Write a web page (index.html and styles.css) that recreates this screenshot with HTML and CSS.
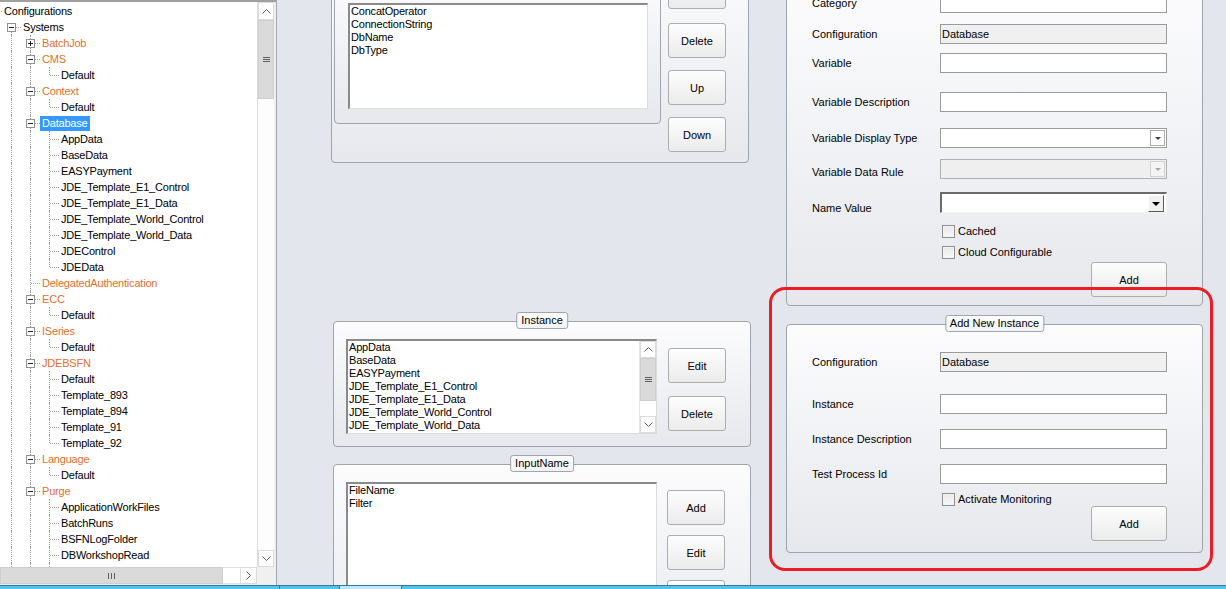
FILE: index.html
```html
<!DOCTYPE html>
<html lang="en">
<head>
    <meta charset="UTF-8">
    <title>Configurations</title>
    <link rel="stylesheet" href="styles.css">
</head>
<body>
<div class="window">
    <div class="main">

        <!-- configuration tree -->
        <aside class="tree-panel">
            <div class="tree-view">
                <div class="tree">
                    <div class="tree-rows">
                        <div class="node"><i class="cell h"></i><span class="label">Configurations</span></div>
                        <div class="node"><i class="cell"></i><i class="cell d"><b class="box"></b></i><span class="label">Systems</span></div>
                        <div class="node"><i class="cell"></i><i class="cell v"></i><i class="cell t"><b class="box plus"></b></i><span class="label cat">BatchJob</span></div>
                        <div class="node"><i class="cell"></i><i class="cell v"></i><i class="cell t"><b class="box"></b></i><span class="label cat">CMS</span></div>
                        <div class="node"><i class="cell"></i><i class="cell v"></i><i class="cell v"></i><i class="cell l"></i><span class="label">Default</span></div>
                        <div class="node"><i class="cell"></i><i class="cell v"></i><i class="cell t"><b class="box"></b></i><span class="label cat">Context</span></div>
                        <div class="node"><i class="cell"></i><i class="cell v"></i><i class="cell v"></i><i class="cell l"></i><span class="label">Default</span></div>
                        <div class="node"><i class="cell"></i><i class="cell v"></i><i class="cell t"><b class="box"></b></i><span class="label sel">Database</span></div>
                        <div class="node"><i class="cell"></i><i class="cell v"></i><i class="cell v"></i><i class="cell t"></i><span class="label">AppData</span></div>
                        <div class="node"><i class="cell"></i><i class="cell v"></i><i class="cell v"></i><i class="cell t"></i><span class="label">BaseData</span></div>
                        <div class="node"><i class="cell"></i><i class="cell v"></i><i class="cell v"></i><i class="cell t"></i><span class="label">EASYPayment</span></div>
                        <div class="node"><i class="cell"></i><i class="cell v"></i><i class="cell v"></i><i class="cell t"></i><span class="label">JDE_Template_E1_Control</span></div>
                        <div class="node"><i class="cell"></i><i class="cell v"></i><i class="cell v"></i><i class="cell t"></i><span class="label">JDE_Template_E1_Data</span></div>
                        <div class="node"><i class="cell"></i><i class="cell v"></i><i class="cell v"></i><i class="cell t"></i><span class="label">JDE_Template_World_Control</span></div>
                        <div class="node"><i class="cell"></i><i class="cell v"></i><i class="cell v"></i><i class="cell t"></i><span class="label">JDE_Template_World_Data</span></div>
                        <div class="node"><i class="cell"></i><i class="cell v"></i><i class="cell v"></i><i class="cell t"></i><span class="label">JDEControl</span></div>
                        <div class="node"><i class="cell"></i><i class="cell v"></i><i class="cell v"></i><i class="cell l"></i><span class="label">JDEData</span></div>
                        <div class="node"><i class="cell"></i><i class="cell v"></i><i class="cell t"></i><span class="label cat">DelegatedAuthentication</span></div>
                        <div class="node"><i class="cell"></i><i class="cell v"></i><i class="cell t"><b class="box"></b></i><span class="label cat">ECC</span></div>
                        <div class="node"><i class="cell"></i><i class="cell v"></i><i class="cell v"></i><i class="cell l"></i><span class="label">Default</span></div>
                        <div class="node"><i class="cell"></i><i class="cell v"></i><i class="cell t"><b class="box"></b></i><span class="label cat">ISeries</span></div>
                        <div class="node"><i class="cell"></i><i class="cell v"></i><i class="cell v"></i><i class="cell l"></i><span class="label">Default</span></div>
                        <div class="node"><i class="cell"></i><i class="cell v"></i><i class="cell t"><b class="box"></b></i><span class="label cat">JDEBSFN</span></div>
                        <div class="node"><i class="cell"></i><i class="cell v"></i><i class="cell v"></i><i class="cell t"></i><span class="label">Default</span></div>
                        <div class="node"><i class="cell"></i><i class="cell v"></i><i class="cell v"></i><i class="cell t"></i><span class="label">Template_893</span></div>
                        <div class="node"><i class="cell"></i><i class="cell v"></i><i class="cell v"></i><i class="cell t"></i><span class="label">Template_894</span></div>
                        <div class="node"><i class="cell"></i><i class="cell v"></i><i class="cell v"></i><i class="cell t"></i><span class="label">Template_91</span></div>
                        <div class="node"><i class="cell"></i><i class="cell v"></i><i class="cell v"></i><i class="cell l"></i><span class="label">Template_92</span></div>
                        <div class="node"><i class="cell"></i><i class="cell v"></i><i class="cell t"><b class="box"></b></i><span class="label cat">Language</span></div>
                        <div class="node"><i class="cell"></i><i class="cell v"></i><i class="cell v"></i><i class="cell l"></i><span class="label">Default</span></div>
                        <div class="node"><i class="cell"></i><i class="cell v"></i><i class="cell t"><b class="box"></b></i><span class="label cat">Purge</span></div>
                        <div class="node"><i class="cell"></i><i class="cell v"></i><i class="cell v"></i><i class="cell t"></i><span class="label">ApplicationWorkFiles</span></div>
                        <div class="node"><i class="cell"></i><i class="cell v"></i><i class="cell v"></i><i class="cell t"></i><span class="label">BatchRuns</span></div>
                        <div class="node"><i class="cell"></i><i class="cell v"></i><i class="cell v"></i><i class="cell t"></i><span class="label">BSFNLogFolder</span></div>
                        <div class="node"><i class="cell"></i><i class="cell v"></i><i class="cell v"></i><i class="cell t"></i><span class="label">DBWorkshopRead</span></div>
                        <div class="node"><i class="cell"></i><i class="cell v"></i><i class="cell v"></i><i class="cell v"></i></div>
                    </div>
                </div>
                <div class="vscroll">
                    <div class="sb-arrow"><svg width="9" height="5"><path d="M0.5 4.5l4-4 4 4" fill="none" stroke="#606060"/></svg></div>
                    <div class="sb-thumb tree-thumb"><svg width="7" height="5"><path d="M0 0.5h7M0 2.5h7M0 4.5h7" stroke="#606060"/></svg></div>
                    <div class="sb-track"></div>
                    <div class="sb-arrow"><svg width="9" height="5"><path d="M0.5 0.5l4 4 4-4" fill="none" stroke="#606060"/></svg></div>
                </div>
            </div>
            <div class="hscroll">
                <div class="hs-thumb"><svg width="7" height="6"><path d="M0.5 0v6M3.5 0v6M6.5 0v6" stroke="#606060"/></svg></div>
                <div class="hs-track"></div>
                <div class="hs-arrow"><svg width="5" height="9"><path d="M0.5 0.5l4 4-4 4" fill="none" stroke="#606060"/></svg></div>
                <div class="hs-corner"></div>
            </div>
        </aside>

        <!-- lists -->
        <section class="middle">
            <div class="group top-box">
                <div class="group inner-box">
                    <div class="listbox names">
                        <div class="lb-items">
                            <div>ConcatOperator</div>
                            <div>ConnectionString</div>
                            <div>DbName</div>
                            <div>DbType</div>
                        </div>
                    </div>
                </div>
                <div class="btn-stack first-cut">
                    <span class="btn"></span>
                    <span class="btn">Delete</span>
                    <span class="btn">Up</span>
                    <span class="btn">Down</span>
                </div>
            </div>

            <div class="group list-group instance-group">
                <span class="legend">Instance</span>
                <div class="listbox">
                    <div class="lb-items">
                        <div>AppData</div>
                        <div>BaseData</div>
                        <div>EASYPayment</div>
                        <div>JDE_Template_E1_Control</div>
                        <div>JDE_Template_E1_Data</div>
                        <div>JDE_Template_World_Control</div>
                        <div>JDE_Template_World_Data</div>
                    </div>
                    <div class="vbar">
                        <div class="sb-arrow"><svg width="9" height="5"><path d="M0.5 4.5l4-4 4 4" fill="none" stroke="#606060"/></svg></div>
                        <div class="sb-thumb list-thumb"><svg width="7" height="5"><path d="M0 0.5h7M0 2.5h7M0 4.5h7" stroke="#606060"/></svg></div>
                        <div class="sb-track"></div>
                        <div class="sb-arrow"><svg width="9" height="5"><path d="M0.5 0.5l4 4 4-4" fill="none" stroke="#606060"/></svg></div>
                    </div>
                </div>
                <div class="btn-stack instance-btns">
                    <span class="btn">Edit</span>
                    <span class="btn">Delete</span>
                </div>
            </div>

            <div class="group list-group input-group">
                <span class="legend">InputName</span>
                <div class="listbox">
                    <div class="lb-items">
                        <div>FileName</div>
                        <div>Filter</div>
                    </div>
                </div>
                <div class="btn-stack input-btns">
                    <span class="btn">Add</span>
                    <span class="btn">Edit</span>
                    <span class="btn"></span>
                </div>
            </div>
        </section>

        <!-- forms -->
        <section class="right">
            <div class="group form-box var-box">
                <div class="f-row mt-12"><span class="f-label">Category</span><span class="textbox"></span></div>
                <div class="f-row mt-11"><span class="f-label">Configuration</span><span class="textbox readonly">Database</span></div>
                <div class="f-row mt-9"><span class="f-label">Variable</span><span class="textbox"></span></div>
                <div class="f-row mt-19"><span class="f-label">Variable Description</span><span class="textbox"></span></div>
                <div class="f-row mt-16"><span class="f-label">Variable Display Type</span><span class="combo"><i class="combo-btn"></i></span></div>
                <div class="f-row mt-11"><span class="f-label drop-3">Variable Data Rule</span><span class="combo disabled"><i class="combo-btn"></i></span></div>
                <div class="f-row tall mt-13"><span class="f-label drop-6">Name Value</span><span class="combo sunken"><i class="combo-btn"></i></span></div>
                <div class="check-row mt-11"><span class="checkbox"></span>Cached</div>
                <div class="check-row mt-7"><span class="checkbox"></span>Cloud Configurable</div>
                <div class="f-actions mt-3"><span class="btn wide">Add</span></div>
            </div>

            <div class="group form-box instance-form">
                <span class="legend">Add New Instance</span>
                <div class="f-row mt-27"><span class="f-label">Configuration</span><span class="textbox readonly">Database</span></div>
                <div class="f-row mt-22"><span class="f-label">Instance</span><span class="textbox"></span></div>
                <div class="f-row mt-15"><span class="f-label">Instance Description</span><span class="textbox"></span></div>
                <div class="f-row mt-15"><span class="f-label">Test Process Id</span><span class="textbox"></span></div>
                <div class="check-row mt-8"><span class="checkbox"></span>Activate Monitoring</div>
                <div class="f-actions"><span class="btn wide">Add</span></div>
            </div>

            <div class="callout"></div>
        </section>
    </div>
    <div class="task-strip">
        <span class="seg first"></span>
        <span class="seg second"></span>
        <span class="seg tab"></span>
    </div>
</div>
</body>
</html>
```

FILE: styles.css
```css
* { box-sizing: border-box; }

body {
    margin: 0;
    font-family: "Liberation Sans", Arial, sans-serif;
    font-size: 11px;
    color: #000;
    background: #e3e6ec;
    overflow: hidden;
}

.window {
    width: 1226px;
    height: 589px;
    display: flex;
    flex-direction: column;
}
.main {
    height: 585px;
    display: flex;
}

/* ---- tree panel ---- */
.tree-panel {
    width: 277px;
    flex: none;
    display: flex;
    flex-direction: column;
    background: #f0f0f0;
    border-top: 2px solid #a0a0a0;
    border-right: 1px solid #a2a6ad;
    padding-right: 2px;
    padding-bottom: 1px;
}
.tree-view {
    flex: 1;
    display: flex;
    min-height: 0;
}
.tree {
    width: 257px;
    background: #fff;
    overflow: hidden;
    padding-top: 1px;
}
.tree-rows { margin-left: -17px; }
.node {
    height: 16px;
    display: flex;
    align-items: center;
    white-space: nowrap;
}
.cell {
    width: 19px;
    height: 16px;
    flex: none;
    position: relative;
}
.cell::before,
.cell::after {
    content: "";
    position: absolute;
}
.cell.v::before,
.cell.t::before { left: 9px; top: 0; bottom: 0; border-left: 1px dotted #a0a0a0; }
.cell.l::before { left: 9px; top: 0; height: 8px; border-left: 1px dotted #a0a0a0; }
.cell.d::before { left: 9px; top: 8px; bottom: 0; border-left: 1px dotted #a0a0a0; }
.cell.t::after,
.cell.l::after,
.cell.d::after,
.cell.h::after { left: 10px; right: 0; top: 8px; border-top: 1px dotted #a0a0a0; }

/* expander square sits over the connector lines */
.box {
    position: absolute;
    left: 5px;
    top: 4px;
    width: 9px;
    height: 9px;
    border: 1px solid #919191;
    background: #fff;
    z-index: 1;
}
.box::before {
    content: "";
    position: absolute;
    left: 1px;
    top: 3px;
    width: 5px;
    height: 1px;
    background: #222;
}
.box.plus::after {
    content: "";
    position: absolute;
    left: 3px;
    top: 1px;
    width: 1px;
    height: 5px;
    background: #222;
}
.label {
    height: 15px;
    line-height: 15px;
    padding: 0 2px;
    letter-spacing: -0.2px;
}
.label.cat { color: #e3702d; }
.label.sel { background: #3399ff; color: #fff; }

/* scrollbars */
.vscroll {
    width: 17px;
    display: flex;
    flex-direction: column;
    background: #fdfdfd;
    border-left: 1px solid #dcdcdc;
}
.sb-arrow {
    height: 17px;
    flex: none;
    display: flex;
    align-items: center;
    justify-content: center;
    background: #fff;
    border: 1px solid #dcdcdc;
}
.vscroll .sb-arrow:first-child { height: 18px; }
.sb-thumb {
    flex: none;
    display: flex;
    align-items: center;
    justify-content: center;
    background: #dadada;
    border: 1px solid #cfcfcf;
}
.tree-thumb { height: 79px; }
.sb-track { flex: 1; }
.hscroll {
    height: 17px;
    display: flex;
}
.hs-thumb {
    width: 223px;
    display: flex;
    align-items: center;
    justify-content: center;
    background: #dadada;
    border: 1px solid #cfcfcf;
}
.hs-track { width: 17px; background: #fff; border-top: 1px solid #e2e2e2; border-bottom: 1px solid #e2e2e2; }
.hs-arrow {
    width: 17px;
    display: flex;
    align-items: center;
    justify-content: center;
    background: #fff;
    border: 1px solid #dcdcdc;
}
.hs-corner { width: 17px; background: #f0f0f0; }

/* ---- shared controls ---- */
.group {
    position: relative;
    flex: none;
    border: 1px solid #a0a4ac;
    border-radius: 4px;
    background: linear-gradient(#fcfcfd, #e6e8ed);
}
.legend {
    position: absolute;
    top: -10px;
    left: 50%;
    transform: translateX(-50%);
    height: 17px;
    line-height: 15px;
    padding: 0 4px;
    border: 1px solid #a0a4ac;
    border-radius: 3px;
    background: linear-gradient(#fdfdfd, #f2f3f5);
    white-space: nowrap;
}
.btn {
    width: 58px;
    height: 35px;
    flex: none;
    display: flex;
    align-items: center;
    justify-content: center;
    border: 1px solid #adadad;
    border-radius: 3px;
    background: linear-gradient(#fdfdfd, #ebebeb);
}
.btn.wide { width: 76px; }
.btn-stack {
    display: flex;
    flex-direction: column;
}
.listbox {
    display: flex;
    background: #fff;
    border-style: solid;
    border-width: 2px 1px 1px 2px;
    border-color: #8a8a8a #dcdcdc #dcdcdc #8a8a8a;
    overflow: hidden;
}
.lb-items { flex: 1; padding-left: 1px; }
.lb-items div {
    height: 13px;
    line-height: 13px;
    letter-spacing: -0.2px;
    white-space: nowrap;
}
.vbar {
    width: 17px;
    display: flex;
    flex-direction: column;
    border-left: 1px solid #e4e4e4;
}
.list-thumb { height: 43px; }

/* ---- middle column ---- */
.middle {
    width: 483px;
    flex: none;
    display: flex;
    flex-direction: column;
    padding-left: 54px;
    overflow: hidden;
}
.top-box {
    width: 418px;
    height: 203px;
    margin-top: -40px;
    display: flex;
    align-items: flex-start;
}
.inner-box {
    width: 327px;
    height: 154px;
    margin: 9px 0 0 2px;
    padding: 32px 0 0 13px;
}
.names { width: 300px; height: 106px; }
.first-cut { margin: 13px 0 0 7px; }
.first-cut .btn:first-child { margin-bottom: 14px; }
.first-cut .btn + .btn + .btn { margin-top: 12px; }

.list-group {
    width: 418px;
    margin-left: 2px;
    display: flex;
    align-items: flex-start;
    padding: 17px 0 0 12px;
}
.list-group .listbox { width: 311px; }
.instance-group { height: 126px; margin-top: 158px; }
.instance-group .listbox { height: 95px; }
.instance-btns { margin: 9px 0 0 11px; gap: 13px; }
.input-group { height: 200px; margin-top: 17px; }
.input-group .listbox { height: 150px; }
.input-btns { margin: 8px 0 0 10px; gap: 10px; }

/* ---- right column ---- */
.right {
    flex: 1;
    position: relative;
    display: flex;
    flex-direction: column;
    padding-left: 26px;
    overflow: hidden;
}
.form-box {
    width: 417px;
    padding-left: 25px;
}
.var-box { height: 326px; margin-top: -20px; }
.instance-form { height: 229px; margin-top: 18px; }

.f-row {
    display: flex;
    align-items: center;
    height: 20px;
}
.f-row.tall { height: 21px; }
.f-label {
    width: 128px;
    flex: none;
    line-height: 13px;
}
.drop-3 { padding-top: 6px; }
.drop-6 { padding-top: 11px; }
.textbox,
.combo {
    width: 227px;
    height: 100%;
    display: flex;
    align-items: center;
    padding-left: 1px;
    background: #fff;
    border: 1px solid #9a9a9a;
}
.textbox.readonly { background: #f0f0f0; }
.combo { justify-content: flex-end; padding-right: 1px; }
.combo-btn {
    width: 15px;
    height: 16px;
    display: flex;
    align-items: center;
    justify-content: center;
    border: 1px solid #acacac;
    background: #fff;
}
.combo-btn::after {
    content: "";
    border-left: 3px solid transparent;
    border-right: 3px solid transparent;
    border-top: 3px solid #404040;
    margin-top: 1px;
}
.combo.disabled { background: #efefef; border-color: #b0b0b0; }
.combo.disabled .combo-btn { background: #f4f4f4; border-color: #d2d2d2; }
.combo.disabled .combo-btn::after { border-top-color: #a8a8a8; }
.combo.sunken {
    border-width: 2px 1px 1px 2px;
    border-color: #6a6a6a #f2f2f2 #f2f2f2 #6a6a6a;
    padding-right: 2px;
}
.combo.sunken .combo-btn {
    width: 16px;
    height: 17px;
    background: #f0f0f0;
    border-color: #fff #5a5a5a #5a5a5a #fff;
}
.combo.sunken .combo-btn::after {
    border-left-width: 4px;
    border-right-width: 4px;
    border-top: 4px solid #000;
}
.check-row {
    height: 14px;
    display: flex;
    align-items: center;
    padding-left: 130px;
}
.checkbox {
    width: 13px;
    height: 13px;
    margin-right: 3px;
    border: 1px solid #8f8f8f;
    background: linear-gradient(#e8e8e8, #f8f8f8);
    box-shadow: inset 0 0 0 1px #f4f4f4;
}
.f-actions {
    width: 355px;
    display: flex;
    justify-content: flex-end;
}

.mt-3 { margin-top: 3px; }
.mt-7 { margin-top: 7px; }
.mt-8 { margin-top: 8px; }
.mt-9 { margin-top: 9px; }
.mt-11 { margin-top: 11px; }
.mt-12 { margin-top: 12px; }
.mt-13 { margin-top: 13px; }
.mt-15 { margin-top: 15px; }
.mt-16 { margin-top: 16px; }
.mt-19 { margin-top: 19px; }
.mt-22 { margin-top: 22px; }
.mt-27 { margin-top: 27px; }

/* red annotation ring drawn over the form */
.callout {
    position: absolute;
    left: 9px;
    top: 287px;
    width: 444px;
    height: 284px;
    border: 3px solid #ec1c24;
    border-radius: 16px;
    pointer-events: none;
}

/* ---- bottom strip ---- */
.task-strip {
    height: 4px;
    display: flex;
    background: #56c3eb;
    border-top: 1px solid #2d7aa3;
}
.seg { height: 100%; border-right: 1px solid #2d7aa3; }
.seg.first { width: 280px; }
.seg.second { width: 60px; }
.seg.tab { width: 62px; background: #bfe8f8; }
```
